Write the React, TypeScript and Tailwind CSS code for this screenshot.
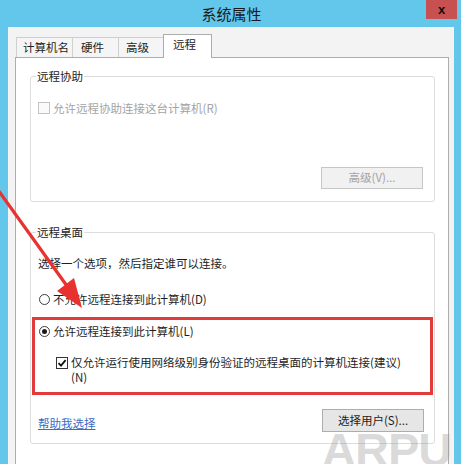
import React from "react";

const font = { fontFamily: '"Noto Sans CJK SC", "Noto Sans", sans-serif' };

function Radio({ checked }: { checked?: boolean }) {
  return (
    <span className="w-[11px] h-[11px] rounded-full border border-[#3c3c3c] bg-white flex items-center justify-center shrink-0">
      {checked && <span className="w-[5px] h-[5px] rounded-full bg-[#1a1a1a]" />}
    </span>
  );
}

function Check({ checked, disabled }: { checked?: boolean; disabled?: boolean }) {
  return (
    <span
      className={
        "w-[12px] h-[12px] border flex items-center justify-center shrink-0 " +
        (disabled ? "border-[#c4c4c4] bg-[#fafafa]" : "border-[#333333] bg-white")
      }
    >
      {checked && (
        <svg width="10" height="10" viewBox="0 0 10 10">
          <path d="M1.5 5.2 L4 7.6 L8.6 2.2" fill="none" stroke="#111" strokeWidth="1.8" />
        </svg>
      )}
    </span>
  );
}

export default function App() {
  return (
    <div
      className="w-[461px] h-[464px] relative overflow-hidden bg-[#62c7eb] flex flex-col text-[11.5px] text-[#1e1e1e]"
      style={font}
    >
      {/* title bar */}
      <div className="h-[27px] flex items-center justify-center shrink-0">
        <span className="text-[15px] leading-[18px] text-[#1a1a1a] ml-[2px]">系统属性</span>
        <div className="absolute right-[4px] top-0 w-[31px] h-[19px] bg-[#c75050] flex items-center justify-center">
          <span
            className="text-[13px] font-bold text-[#111] leading-none"
            style={{ fontFamily: '"Liberation Sans", sans-serif' }}
          >
            x
          </span>
        </div>
      </div>

      {/* body */}
      <div className="flex-1 ml-[8px] mr-[7px] bg-[#f3f3f3] pl-[7px] pr-[5px] pt-[7px] flex flex-col min-h-0">
        {/* tabs */}
        <div className="flex items-end h-[23px] shrink-0">
          <div className="ml-[1px] w-[56px] h-[20px] border-l border-t border-[#cfcfcf] bg-[#f5f5f5] pl-[6px] pt-[1px] leading-[16px]">
            计算机名
          </div>
          <div className="w-[46px] h-[20px] border-l border-t border-[#cfcfcf] bg-[#f5f5f5] pl-[8px] pt-[1px] leading-[16px]">
            硬件
          </div>
          <div className="w-[45px] h-[20px] border-l border-t border-[#cfcfcf] bg-[#f5f5f5] pl-[7px] pt-[1px] leading-[16px]">
            高级
          </div>
          <div className="relative z-10 -mb-px w-[49px] h-[24px] border-l border-r border-t border-[#adadad] bg-white pl-[9px] pt-[1px] leading-[16px]">
            远程
          </div>
        </div>

        {/* panel */}
        <div className="flex-1 bg-white border-l border-r border-t border-[#adadad] pl-[14px] pr-[13px] pt-[10px]">
          {/* 远程协助 */}
          <fieldset className="border border-[#dcdcdc] rounded-[3px] px-0 pb-[12px]">
            <legend className="ml-[5px] px-[1px] leading-[16px] text-[#222]">远程协助</legend>
            <div className="mt-[16px] pl-[7px] flex items-center h-[16px]">
              <Check disabled />
              <span className="ml-[3px] text-[#a3a3a3] leading-[16px]">允许远程协助连接这台计算机(R)</span>
            </div>
            <div className="mt-[51px] flex justify-end pr-[11px]">
              <div className="w-[102px] h-[22px] border border-[#c6c6c6] bg-[#f1f1f1] flex items-center justify-center text-[#a3a3a3]">
                高级(V)...
              </div>
            </div>
          </fieldset>

          {/* 远程桌面 */}
          <fieldset className="mt-[22px] border border-[#dcdcdc] rounded-[3px] px-0 pb-[11px]">
            <legend className="ml-[5px] px-[1px] leading-[16px] text-[#222]">远程桌面</legend>
            <div className="mt-[15px] pl-[7px] leading-[16px]">选择一个选项，然后指定谁可以连接。</div>
            <div className="mt-[20px] pl-[8px] flex items-center h-[16px]">
              <Radio />
              <span className="ml-[3px] leading-[16px]">不允许远程连接到此计算机(D)</span>
            </div>
            <div className="mt-[10px] ml-[1px] mr-[1px] border-[3px] border-[#e23b3b] pt-[3px] pl-[4px] pb-[7px]">
              <div className="flex items-center h-[16px]">
                <Radio checked />
                <span className="ml-[3px] leading-[16px]">允许远程连接到此计算机(L)</span>
              </div>
              <div className="mt-[16px] pl-[17px] flex items-start">
                <span className="mt-[2px]">
                  <Check checked />
                </span>
                <span className="ml-[3px] leading-[15px]">
                  仅允许运行使用网络级别身份验证的远程桌面的计算机连接(建议)
                  <br />
                  (N)
                </span>
              </div>
            </div>
            <div className="mt-[14px] h-[23px] flex items-end justify-between pl-[7px] pr-[10px]">
              <span className="mb-[1px] leading-[16px] text-[#3b6cc4] underline">帮助我选择</span>
              <div className="relative z-10 w-[102px] h-[23px] border border-[#adadad] bg-[#e6e6e6] flex items-center justify-center text-[#1e1e1e]">
                选择用户(S)...
              </div>
            </div>
          </fieldset>
        </div>
      </div>

      {/* watermark */}
      <div
        className="absolute left-[322px] top-[426px] text-[47px] font-bold leading-none text-[rgba(150,150,150,0.35)] pointer-events-none tracking-[-1px]"
        style={{ fontFamily: '"Liberation Sans", sans-serif' }}
      >
        ARPU
      </div>

      {/* red arrow */}
      <svg className="absolute left-0 top-0 pointer-events-none" width="461" height="464">
        <line x1="-12" y1="176" x2="67" y2="286" stroke="#e8322f" strokeWidth="3.2" />
        <polygon points="82,308 57,291 74,278" fill="#e8322f" />
      </svg>
    </div>
  );
}
